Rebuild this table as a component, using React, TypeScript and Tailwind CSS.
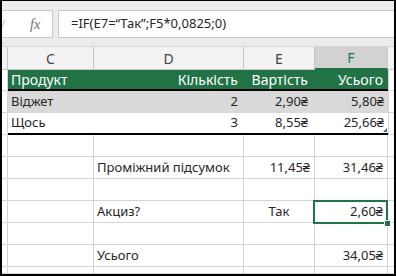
import React from "react";

const font = { fontFamily: '"Noto Sans", "DejaVu Sans", sans-serif' };

type Cell = { text?: string; align?: "l" | "r" | "c" };

function GridRow({
  cells,
  h = "h-[22px]",
}: {
  cells: Cell[];
  h?: string;
}) {
  const widths = ["w-[86px]", "w-[150px]", "w-[71px]", "w-[73px]"];
  return (
    <div className={`flex ${h} shrink-0`}>
      <div className="w-[6px] shrink-0 border-r border-b border-[#d4d4d4]" />
      {cells.map((c, i) => (
        <div
          key={i}
          className={`${widths[i]} shrink-0 border-r border-b border-[#d4d4d4] flex items-center text-[13px] text-[#262626] whitespace-nowrap ${
            c.align === "r" ? "justify-end pr-[4px]" : c.align === "c" ? "justify-center" : "pl-[3px]"
          }`}
        >
          {c.text}
        </div>
      ))}
      <div className="flex-1 border-b border-[#d4d4d4]" />
    </div>
  );
}

export default function App() {
  return (
    <div
      className="w-[396px] h-[276px] overflow-hidden bg-white border-t border-l-2 border-r-2 border-b-2 border-black flex flex-col"
      style={font}
    >
      {/* formula bar */}
      <div className="h-[46px] shrink-0 bg-[#ececec] border-b border-[#d6d6d6] flex items-start pt-[9px]">
        <div className="relative w-[51px] h-[28px] bg-white border border-l-0 border-[#c8c8c8] flex items-center">
          <svg className="absolute left-[-2px] top-[8px]" width="6" height="8" viewBox="0 0 6 8">
            <path d="M0 5 L2 7 L5 1" stroke="#c8c8c8" strokeWidth="1.2" fill="none" />
          </svg>
          <span
            className="ml-[28px] text-[14px] italic text-[#6e6e6e]"
            style={{ fontFamily: '"Liberation Serif", serif' }}
          >
            fx
          </span>
        </div>
        <div className="ml-[5px] flex-1 h-[28px] bg-white border border-r-0 border-[#c8c8c8] flex items-center pl-[12px] text-[13px] text-[#262626] whitespace-nowrap">
          =IF(E7=“Так”;F5*0,0825;0)
        </div>
      </div>

      {/* column headers */}
      <div className="flex h-[23px] shrink-0 bg-[#f3f3f3] text-[14px] text-[#444]">
        <div className="w-[6px] shrink-0 border-r border-b border-[#c6c6c6]" />
        <div className="w-[86px] shrink-0 border-r border-b border-[#c6c6c6] flex items-center justify-center">C</div>
        <div className="w-[150px] shrink-0 border-r border-b border-[#c6c6c6] flex items-center justify-center">D</div>
        <div className="w-[71px] shrink-0 border-r border-b border-[#c6c6c6] flex items-center justify-center">E</div>
        <div className="w-[73px] shrink-0 border-r border-[#c6c6c6] border-b-2 border-b-[#217346] bg-[#d2d2d2] text-[#217346] flex items-center justify-center">
          F
        </div>
        <div className="flex-1 border-b border-[#c6c6c6]" />
      </div>

      {/* table header row */}
      <div className="flex h-[21px] shrink-0">
        <div className="w-[6px] shrink-0 border-r border-b border-[#d4d4d4]" />
        <div className="w-[380px] shrink-0 flex bg-[#217346] border-b-2 border-black text-white text-[14px]">
          <div className="w-[86px] pl-[3px] flex items-center">Продукт</div>
          <div className="w-[150px] pr-[6px] flex items-center justify-end">Кількість</div>
          <div className="w-[71px] pr-[7px] flex items-center justify-end">Вартість</div>
          <div className="w-[73px] pr-[5px] flex items-center justify-end">Усього</div>
        </div>
        <div className="flex-1 border-l border-b border-[#d4d4d4]" />
      </div>

      {/* row 1 */}
      <div className="flex h-[22px] shrink-0">
        <div className="w-[6px] shrink-0 border-r border-b border-[#d4d4d4]" />
        <div className="w-[380px] shrink-0 flex bg-[#d9d9d9] text-[13px] text-[#262626] border-b border-[#d9d9d9]">
          <div className="w-[86px] pl-[3px] flex items-center">Віджет</div>
          <div className="w-[150px] pr-[6px] flex items-center justify-end">2</div>
          <div className="w-[71px] pr-[7px] flex items-center justify-end">2,90₴</div>
          <div className="w-[73px] pr-[4px] flex items-center justify-end">5,80₴</div>
        </div>
        <div className="flex-1 border-l border-b border-[#d4d4d4]" />
      </div>

      {/* row 2 */}
      <div className="flex h-[22px] shrink-0">
        <div className="w-[6px] shrink-0 border-r border-b border-[#d4d4d4]" />
        <div className="relative w-[380px] shrink-0 flex bg-white text-[13px] text-[#262626] border-b-2 border-black">
          <div className="w-[86px] pl-[3px] flex items-center">Щось</div>
          <div className="w-[150px] pr-[6px] flex items-center justify-end">3</div>
          <div className="w-[71px] pr-[7px] flex items-center justify-end">8,55₴</div>
          <div className="w-[73px] pr-[4px] flex items-center justify-end">25,66₴</div>
          <svg className="absolute right-[1px] bottom-[1px]" width="4" height="4" viewBox="0 0 4 4">
            <path d="M4 0 L4 4 L0 4 Z" fill="#3a66b0" />
          </svg>
        </div>
        <div className="flex-1 border-l border-b border-[#d4d4d4]" />
      </div>

      <GridRow cells={[{}, {}, {}, {}]} />
      <GridRow
        cells={[{}, { text: "Проміжний підсумок" }, { text: "11,45₴", align: "r" }, { text: "31,46₴", align: "r" }]}
      />
      <GridRow cells={[{}, {}, {}, {}]} />

      {/* Акциз row with selection */}
      <div className="flex h-[22px] shrink-0">
        <div className="w-[6px] shrink-0 border-r border-b border-[#d4d4d4]" />
        <div className="w-[86px] shrink-0 border-r border-b border-[#d4d4d4]" />
        <div className="w-[150px] shrink-0 border-r border-b border-[#d4d4d4] flex items-center pl-[3px] text-[13px] text-[#262626]">
          Акциз?
        </div>
        <div className="w-[71px] shrink-0 border-r border-b border-[#d4d4d4] flex items-center justify-center text-[13px] text-[#262626]">
          Так
        </div>
        <div className="relative w-[73px] shrink-0 border-r border-b border-[#d4d4d4] flex items-center justify-end pr-[4px] text-[13px] text-[#262626]">
          2,60₴
          <div className="absolute -left-[2px] -top-[1px] -right-[1px] -bottom-[2px] border-2 border-[#217346]" />
          <div className="absolute -right-[4px] -bottom-[5px] w-[7px] h-[7px] bg-[#217346] border border-white" />
        </div>
        <div className="flex-1 border-b border-[#d4d4d4]" />
      </div>

      <GridRow cells={[{}, {}, {}, {}]} />
      <GridRow cells={[{}, { text: "Усього" }, {}, { text: "34,05₴", align: "r" }]} />
      <GridRow cells={[{}, {}, {}, {}]} h="flex-1" />
    </div>
  );
}
